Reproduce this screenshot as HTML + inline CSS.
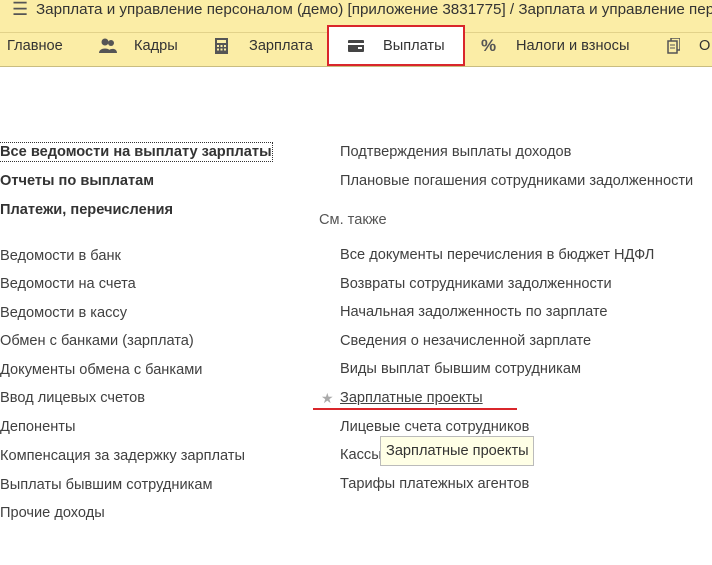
<!DOCTYPE html>
<html><head><meta charset="utf-8"><style>
body{margin:0;width:712px;height:565px;background:#fff;font-family:"Liberation Sans",Arial,sans-serif;color:#404040;position:relative;overflow:hidden;font-size:14.6px}
.t{position:absolute;left:0;top:0;width:712px;height:32px;background:#fbeda6;border-bottom:1px solid #e2d28a;}
.n{position:absolute;left:0;top:33px;width:712px;height:33px;background:#fbeda6;border-bottom:1px solid #c9bd80;}
.a{position:absolute;white-space:nowrap;line-height:18px}
.b{font-weight:bold;color:#333}
</style></head><body>
<div class="t"></div>
<div class="a" style="left:12px;top:0px;font-size:18px;color:#555">☰</div>
<div class="a" style="left:36px;top:1px;width:676px;overflow:hidden;font-size:15.2px;color:#333">Зарплата и управление персоналом (демо) [приложение 3831775] / Зарплата и управление персоналом</div>
<div class="n"></div>
<div style="position:absolute;left:327px;top:25px;width:134px;height:37px;background:#fff;border:2px solid #d9262b"></div>
<div class="a" style="left:7px;top:37px;color:#333">Главное</div>
<svg style="position:absolute;left:99px;top:38px" width="18" height="16"><circle cx="6" cy="4" r="3.5" fill="#555"/><circle cx="12" cy="5" r="3" fill="#555"/><path d="M0 15c0-6 12-6 12 0z M8 15c1-5 10-6 10 0z" fill="#555"/></svg>
<div class="a" style="left:134px;top:37px;color:#333">Кадры</div>
<svg style="position:absolute;left:215px;top:38px" width="13" height="16"><rect x="0" y="0" width="13" height="16" fill="#555"/><rect x="2" y="2" width="9" height="3" fill="#fbeda6"/><g fill="#fbeda6"><rect x="2" y="7" width="2" height="2"/><rect x="5.5" y="7" width="2" height="2"/><rect x="9" y="7" width="2" height="2"/><rect x="2" y="10.5" width="2" height="2"/><rect x="5.5" y="10.5" width="2" height="2"/><rect x="9" y="10.5" width="2" height="2"/></g></svg>
<div class="a" style="left:249px;top:37px;color:#333">Зарплата</div>
<svg style="position:absolute;left:348px;top:40px" width="16" height="12"><rect width="16" height="12" rx="1" fill="#444"/><rect x="0" y="3" width="16" height="2" fill="#fff"/><rect x="10" y="7" width="4" height="2" fill="#fff"/></svg>
<div class="a" style="left:383px;top:37px;color:#333">Выплаты</div>
<div class="a" style="left:481px;top:37px;color:#555;font-weight:bold;font-size:17px">%</div>
<div class="a" style="left:516px;top:37px;color:#333">Налоги и взносы</div>
<svg style="position:absolute;left:667px;top:38px" width="13" height="16"><rect x="4" y="0" width="9" height="12" fill="none" stroke="#555" stroke-width="1.5"/><rect x="1" y="3" width="9" height="12" fill="#fbeda6" stroke="#555" stroke-width="1.5"/><path d="M3 7h5M3 10h5" stroke="#555"/></svg>
<div class="a" style="left:699px;top:37px;color:#333">О</div>

<div class="a b" style="left:0;top:143px;outline:1px dotted #333">Все ведомости на выплату зарплаты</div>
<div class="a b" style="left:0;top:172px">Отчеты по выплатам</div>
<div class="a b" style="left:0;top:201px">Платежи, перечисления</div>
<div class="a" style="left:0;top:247px">Ведомости в банк</div>
<div class="a" style="left:0;top:275px">Ведомости на счета</div>
<div class="a" style="left:0;top:304px">Ведомости в кассу</div>
<div class="a" style="left:0;top:332px">Обмен с банками (зарплата)</div>
<div class="a" style="left:0;top:361px">Документы обмена с банками</div>
<div class="a" style="left:0;top:389px">Ввод лицевых счетов</div>
<div class="a" style="left:0;top:418px">Депоненты</div>
<div class="a" style="left:0;top:447px">Компенсация за задержку зарплаты</div>
<div class="a" style="left:0;top:476px">Выплаты бывшим сотрудникам</div>
<div class="a" style="left:0;top:504px">Прочие доходы</div>

<div class="a" style="left:340px;top:143px">Подтверждения выплаты доходов</div>
<div class="a" style="left:340px;top:172px">Плановые погашения сотрудниками задолженности</div>
<div class="a" style="left:319px;top:211px;color:#555">См. также</div>
<div class="a" style="left:340px;top:246px">Все документы перечисления в бюджет НДФЛ</div>
<div class="a" style="left:340px;top:275px">Возвраты сотрудниками задолженности</div>
<div class="a" style="left:340px;top:303px">Начальная задолженность по зарплате</div>
<div class="a" style="left:340px;top:332px">Сведения о незачисленной зарплате</div>
<div class="a" style="left:340px;top:360px">Виды выплат бывшим сотрудникам</div>
<div class="a" style="left:321px;top:389px;color:#aaa;font-size:14px">★</div>
<div class="a" style="left:340px;top:389px;text-decoration:underline">Зарплатные проекты</div>
<div style="position:absolute;left:313px;top:408px;width:204px;height:2px;background:#d9262b"></div>
<div class="a" style="left:340px;top:418px">Лицевые счета сотрудников</div>
<div class="a" style="left:340px;top:446px">Кассы</div>
<div class="a" style="left:380px;top:436px;background:#ffffe6;border:1px solid #bbb;padding:5px 4px 5px 5px;color:#333">Зарплатные проекты</div>
<div class="a" style="left:340px;top:475px">Тарифы платежных агентов</div>
</body></html>
